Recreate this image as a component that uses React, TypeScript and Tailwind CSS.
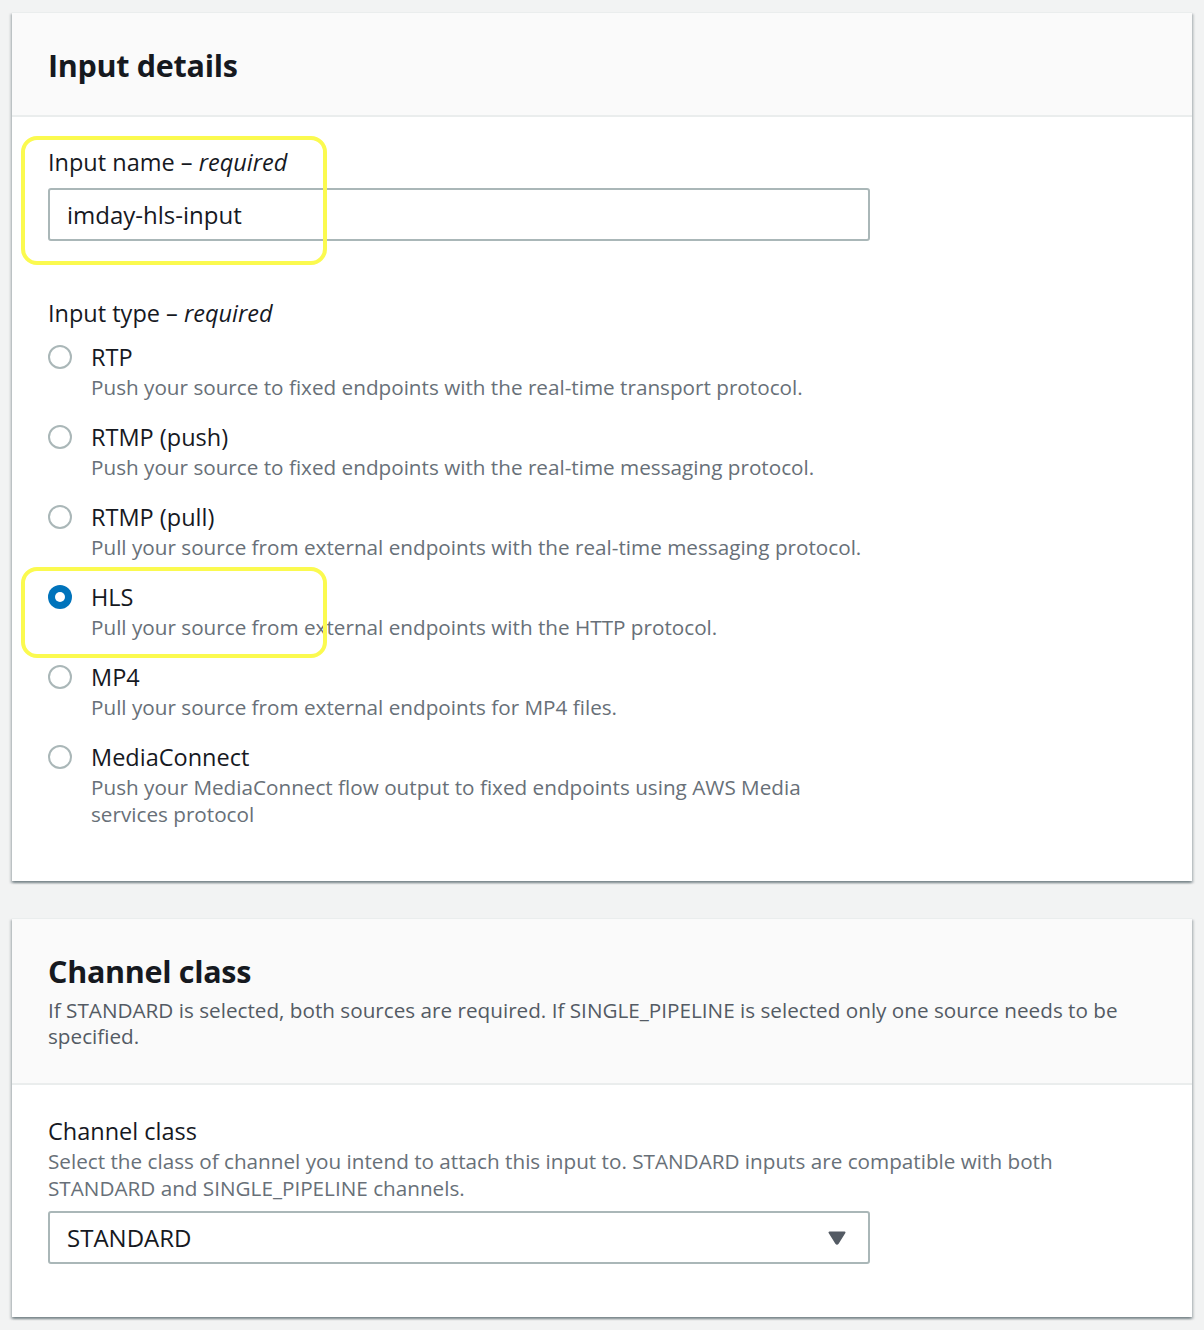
import React from 'react';

type Option = {
  value: string;
  label: string;
  description: string;
};

const inputTypes: Option[] = [
  { value: 'rtp', label: 'RTP', description: 'Push your source to fixed endpoints with the real-time transport protocol.' },
  { value: 'rtmp-push', label: 'RTMP (push)', description: 'Push your source to fixed endpoints with the real-time messaging protocol.' },
  { value: 'rtmp-pull', label: 'RTMP (pull)', description: 'Pull your source from external endpoints with the real-time messaging protocol.' },
  { value: 'hls', label: 'HLS', description: 'Pull your source from external endpoints with the HTTP protocol.' },
  { value: 'mp4', label: 'MP4', description: 'Pull your source from external endpoints for MP4 files.' },
  {
    value: 'mediaconnect',
    label: 'MediaConnect',
    description: 'Push your MediaConnect flow output to fixed endpoints using AWS Media services protocol',
  },
];

function Radio({ checked }: { checked: boolean }) {
  if (checked) {
    return (
      <span className="mt-[1px] flex h-6 w-6 shrink-0 items-center justify-center rounded-full bg-[#0073bb]">
        <span className="h-[10px] w-[10px] rounded-full bg-white" />
      </span>
    );
  }
  return <span className="mt-[1px] h-6 w-6 shrink-0 rounded-full border-2 border-[#aab7b8] bg-white" />;
}

function Card({ children }: { children: React.ReactNode }) {
  return (
    <div className="border-t border-[#eaeded] bg-white shadow-[0_2px_2px_0_rgba(0,28,36,0.3),2px_2px_2px_0_rgba(0,28,36,0.15),-2px_2px_2px_0_rgba(0,28,36,0.15)]">
      {children}
    </div>
  );
}

function Highlight({ className }: { className: string }) {
  return (
    <div
      className={`pointer-events-none absolute rounded-[16px] border-[4px] border-[#fbfa4f] ${className}`}
    />
  );
}

export default function App() {
  const selected = 'hls';

  return (
    <div
      className="min-h-[1330px] bg-[#f2f3f3] px-3 pt-3 text-[#16191f]"
      style={{ fontFamily: '"Open Sans", "Noto Sans", Arial, sans-serif' }}
    >
      <Card>
        <div className="border-b-2 border-[#eaeded] bg-[#fafafa] px-9 pb-[32px] pt-[34px]">
          <h2 className="text-[30.5px] font-bold leading-[36px] tracking-[-0.3px]">Input details</h2>
        </div>

        <div className="relative px-9 pb-[53px] pt-[32px]">
          <Highlight className="left-[9px] top-[19px] h-[129px] w-[306px]" />
          <Highlight className="left-[9px] top-[450px] h-[91px] w-[306px]" />

          <div className="max-w-[822px]">
            <label className="block text-[23.5px] leading-[26px]">
              Input name – <i>required</i>
            </label>
            <div className="mt-[13px] flex h-[53px] items-center rounded-[3px] border-2 border-[#aab7b8] px-[17px] text-[24px]">
              imday-hls-input
            </div>

            <div className="mt-[59px] text-[23.5px] leading-[26px]">
              Input type – <i>required</i>
            </div>

            <div className="mt-[18px] flex flex-col gap-[23px]">
              {inputTypes.map((opt) => (
                <div key={opt.value} className="flex gap-[19px]">
                  <Radio checked={opt.value === selected} />
                  <div>
                    <div className="text-[23.5px] leading-[26px]">{opt.label}</div>
                    <div className="mt-[4px] text-[20.7px] leading-[27px] text-[#687078]">{opt.description}</div>
                  </div>
                </div>
              ))}
            </div>
          </div>
        </div>
      </Card>

      <div className="h-[37px]" />

      <Card>
        <div className="border-b-2 border-[#eaeded] bg-[#fafafa] px-9 pb-[34px] pt-[34px]">
          <h2 className="text-[30.5px] font-bold leading-[36px] tracking-[-0.3px]">Channel class</h2>
          <p className="mt-[8px] text-[20.7px] leading-[26px] text-[#545b64]">
            If STANDARD is selected, both sources are required. If SINGLE_PIPELINE is selected only one source needs to be
            specified.
          </p>
        </div>

        <div className="px-9 pb-[53px] pt-[33px]">
          <div className="text-[23.5px] leading-[26px]">Channel class</div>
          <div className="mt-[4px] text-[20.7px] leading-[27px] text-[#687078]">
            Select the class of channel you intend to attach this input to. STANDARD inputs are compatible with both
            STANDARD and SINGLE_PIPELINE channels.
          </div>
          <div className="mt-[9px] flex h-[53px] max-w-[822px] items-center justify-between rounded-[3px] border-2 border-[#aab7b8] pl-[17px] pr-[22px] text-[24px]">
            <span>STANDARD</span>
            <svg width="18" height="14" viewBox="0 0 18 14" aria-hidden="true">
              <path d="M1.5 1.5 H16.5 L9.8 12.2 Q9 13.3 8.2 12.2 Z" fill="#545b64" stroke="#545b64" strokeWidth="2" strokeLinejoin="round" />
            </svg>
          </div>
        </div>
      </Card>
    </div>
  );
}
